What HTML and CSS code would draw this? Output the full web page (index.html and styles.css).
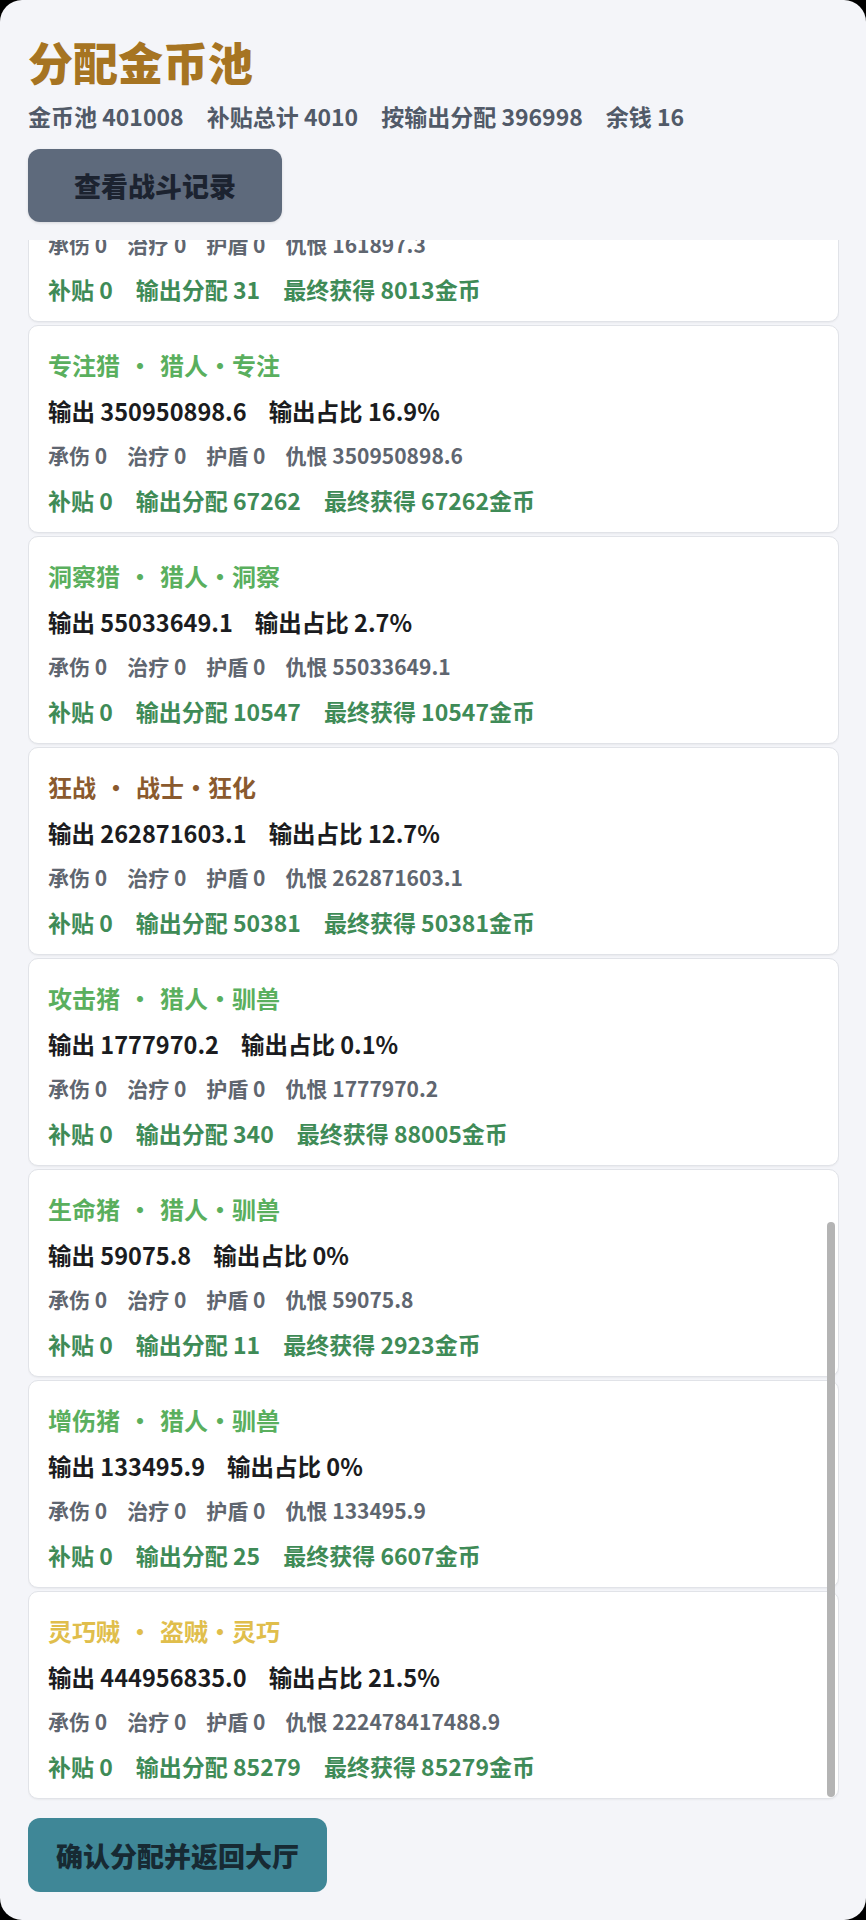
FILE: index.html
```html
<!DOCTYPE html>
<html lang="zh-CN">
<head>
    <meta charset="UTF-8">
    <meta name="viewport" content="width=device-width, initial-scale=1.0">
    <title>分配金币池</title>
    <link rel="stylesheet" href="styles.css">
</head>
<body>
    <div class="panel">
        <h1 class="title">分配金币池</h1>
        <div class="summary">
            <span>金币池 401008</span>
            <span>补贴总计 4010</span>
            <span>按输出分配 396998</span>
            <span>余钱 16</span>
        </div>
        <button class="btn btn-log">查看战斗记录</button>

        <div class="list-wrap">
            <div class="list" id="list">
                <div class="card">
                    <div class="card-title hunter">召唤猪<span class="sep">·</span>猎人·驯兽</div>
                    <div class="row dmg"><span>输出 161897.3</span><span>输出占比 0%</span></div>
                    <div class="row stats"><span>承伤 0</span><span>治疗 0</span><span>护盾 0</span><span>仇恨 161897.3</span></div>
                    <div class="row gold"><span>补贴 0</span><span>输出分配 31</span><span>最终获得 8013金币</span></div>
                </div>
                <div class="card">
                    <div class="card-title hunter">专注猎<span class="sep">·</span>猎人·专注</div>
                    <div class="row dmg"><span>输出 350950898.6</span><span>输出占比 16.9%</span></div>
                    <div class="row stats"><span>承伤 0</span><span>治疗 0</span><span>护盾 0</span><span>仇恨 350950898.6</span></div>
                    <div class="row gold"><span>补贴 0</span><span>输出分配 67262</span><span>最终获得 67262金币</span></div>
                </div>
                <div class="card">
                    <div class="card-title hunter">洞察猎<span class="sep">·</span>猎人·洞察</div>
                    <div class="row dmg"><span>输出 55033649.1</span><span>输出占比 2.7%</span></div>
                    <div class="row stats"><span>承伤 0</span><span>治疗 0</span><span>护盾 0</span><span>仇恨 55033649.1</span></div>
                    <div class="row gold"><span>补贴 0</span><span>输出分配 10547</span><span>最终获得 10547金币</span></div>
                </div>
                <div class="card">
                    <div class="card-title warrior">狂战<span class="sep">·</span>战士·狂化</div>
                    <div class="row dmg"><span>输出 262871603.1</span><span>输出占比 12.7%</span></div>
                    <div class="row stats"><span>承伤 0</span><span>治疗 0</span><span>护盾 0</span><span>仇恨 262871603.1</span></div>
                    <div class="row gold"><span>补贴 0</span><span>输出分配 50381</span><span>最终获得 50381金币</span></div>
                </div>
                <div class="card">
                    <div class="card-title hunter">攻击猪<span class="sep">·</span>猎人·驯兽</div>
                    <div class="row dmg"><span>输出 1777970.2</span><span>输出占比 0.1%</span></div>
                    <div class="row stats"><span>承伤 0</span><span>治疗 0</span><span>护盾 0</span><span>仇恨 1777970.2</span></div>
                    <div class="row gold"><span>补贴 0</span><span>输出分配 340</span><span>最终获得 88005金币</span></div>
                </div>
                <div class="card">
                    <div class="card-title hunter">生命猪<span class="sep">·</span>猎人·驯兽</div>
                    <div class="row dmg"><span>输出 59075.8</span><span>输出占比 0%</span></div>
                    <div class="row stats"><span>承伤 0</span><span>治疗 0</span><span>护盾 0</span><span>仇恨 59075.8</span></div>
                    <div class="row gold"><span>补贴 0</span><span>输出分配 11</span><span>最终获得 2923金币</span></div>
                </div>
                <div class="card">
                    <div class="card-title hunter">增伤猪<span class="sep">·</span>猎人·驯兽</div>
                    <div class="row dmg"><span>输出 133495.9</span><span>输出占比 0%</span></div>
                    <div class="row stats"><span>承伤 0</span><span>治疗 0</span><span>护盾 0</span><span>仇恨 133495.9</span></div>
                    <div class="row gold"><span>补贴 0</span><span>输出分配 25</span><span>最终获得 6607金币</span></div>
                </div>
                <div class="card">
                    <div class="card-title rogue">灵巧贼<span class="sep">·</span>盗贼·灵巧</div>
                    <div class="row dmg"><span>输出 444956835.0</span><span>输出占比 21.5%</span></div>
                    <div class="row stats"><span>承伤 0</span><span>治疗 0</span><span>护盾 0</span><span>仇恨 222478417488.9</span></div>
                    <div class="row gold"><span>补贴 0</span><span>输出分配 85279</span><span>最终获得 85279金币</span></div>
                </div>
            </div>
            <div class="scroll-thumb"></div>
        </div>

        <button class="btn btn-confirm">确认分配并返回大厅</button>
    </div>

    <script>
        // list is scrolled to the end (latest members)
        const list = document.getElementById('list');
        list.scrollTop = list.scrollHeight;
    </script>
</body>
</html>
```

FILE: styles.css
```css
body {
    margin: 0;
    background-color: #000;
    font-family: "Noto Sans CJK SC", "Noto Sans", sans-serif;
}
.panel {
    height: 1920px;
    box-sizing: border-box;
    padding: 35px 27px 28px 28px;
    background-color: #f4f5f9;
    border-radius: 22px;
    display: flex;
    flex-direction: column;
    align-items: flex-start;
}
.title {
    margin: 0;
    font-size: 45px;
    line-height: 53px;
    font-weight: 900;
    color: #a67422;
}
.summary {
    margin-top: 12px;
    display: flex;
    gap: 23px;
    font-size: 23px;
    line-height: 32px;
    font-weight: 700;
    color: #515a68;
}
.btn {
    font-family: inherit;
    font-weight: 900;
    border: none;
    border-radius: 12px;
    cursor: pointer;
}
.btn-log {
    margin-top: 17px;
    width: 254px;
    height: 73px;
    font-size: 27px;
    background-color: #5e6a7c;
    color: #1c2330;
    box-shadow: 0 1px 3px rgba(0, 0, 0, 0.12);
}
.list-wrap {
    position: relative;
    margin-top: 18px;
    align-self: stretch;
    flex: 1;
    min-height: 0;
}
.list {
    height: 100%;
    box-sizing: border-box;
    padding-bottom: 2px;
    overflow-y: auto;
    scrollbar-width: none; /* overlay thumb drawn below */
    display: flex;
    flex-direction: column;
    gap: 3px;
}
.scroll-thumb {
    position: absolute;
    right: 4px;
    bottom: 4px;
    width: 8px;
    height: 575px;
    border-radius: 4px;
    background-color: #b4b4b4;
}
.card {
    flex-shrink: 0;
    padding: 21px 19px 16px;
    background-color: #fff;
    border: 1px solid #e1e3e8;
    border-radius: 10px;
    box-shadow: 0 1px 2px rgba(0, 0, 0, 0.05);
}
.card-title {
    font-size: 24px;
    line-height: 36px;
    font-weight: 700;
}
.card-title .sep {
    margin: 0 8px;
}
.hunter {
    color: #5aaf5e;
}
.warrior {
    color: #8a5a2e;
}
.rogue {
    color: #e0be4c;
}
.row {
    display: flex;
    font-weight: 700;
}
.dmg {
    margin-top: 12px;
    gap: 22px;
    font-size: 23.5px;
    line-height: 32px;
    color: #1b1c20;
}
.stats {
    margin-top: 13px;
    gap: 20px;
    font-size: 21px;
    line-height: 30px;
    color: #5f6670;
}
.gold {
    margin-top: 14px;
    gap: 23px;
    font-size: 23px;
    line-height: 32px;
    color: #3f8b57;
}
.btn-confirm {
    margin-top: 17px;
    height: 74px;
    padding: 0 28px;
    font-size: 27px;
    background-color: #3f8797;
    color: #172a33;
}
```
